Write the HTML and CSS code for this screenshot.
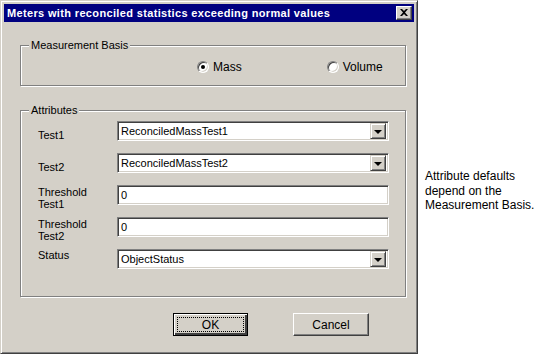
FILE: index.html
```html
<!DOCTYPE html>
<html>
<head>
<meta charset="utf-8">
<title>Meters with reconciled statistics</title>
<link rel="stylesheet" href="styles.css">
</head>
<body>
<div class="dialog">
  <div class="titlebar">
    <span class="title">Meters with reconciled statistics exceeding normal values</span>
    <span class="close"><svg width="8" height="7" viewBox="0 0 8 7"><path d="M0 0h2l2 2 2-2h2L5 3.5 8 7H6L4 5 2 7H0l3-3.5z" fill="#000"/></svg></span>
  </div>
  <div class="content">
    <fieldset class="group basis">
      <legend>Measurement Basis</legend>
      <div class="radios">
        <label class="radio"><span class="dot checked"></span>Mass</label>
        <label class="radio"><span class="dot"></span>Volume</label>
      </div>
    </fieldset>
    <fieldset class="group attrs">
      <legend>Attributes</legend>
      <div class="row">
        <span class="lbl low">Test1</span>
        <div class="combo"><span class="val">ReconciledMassTest1</span><span class="drop"><i></i></span></div>
      </div>
      <div class="row">
        <span class="lbl low">Test2</span>
        <div class="combo"><span class="val">ReconciledMassTest2</span><span class="drop"><i></i></span></div>
      </div>
      <div class="row">
        <span class="lbl two">Threshold<br>Test1</span>
        <div class="field"><span class="val">0</span></div>
      </div>
      <div class="row">
        <span class="lbl two">Threshold<br>Test2</span>
        <div class="field"><span class="val">0</span></div>
      </div>
      <div class="row">
        <span class="lbl">Status</span>
        <div class="combo"><span class="val">ObjectStatus</span><span class="drop"><i></i></span></div>
      </div>
    </fieldset>
    <div class="buttons">
      <button class="btn default"><span>OK</span></button>
      <button class="btn">Cancel</button>
    </div>
  </div>
</div>
<p class="note">Attribute defaults<br>depend on the<br>Measurement Basis.</p>
</body>
</html>
```
FILE: styles.css
```css
html, body {
  margin: 0;
  padding: 0;
  background: #fff;
}
body {
  display: flex;
  align-items: flex-start;
  font-family: "Liberation Sans", Arial, sans-serif;
  font-size: 11px;
  color: #000;
}
.dialog {
  width: 418px;
  height: 354px;
  box-sizing: border-box;
  background: #d4d0c8;
  border: 1px solid;
  border-color: #d4d0c8 #404040 #404040 #d4d0c8;
  box-shadow: inset 1px 1px 0 #fff, inset -1px -1px 0 #808080;
  padding: 3px;
  flex: none;
}
.titlebar {
  height: 18px;
  background: #000080;
  display: flex;
  align-items: center;
  justify-content: space-between;
  padding: 0 2px 0 3px;
}
.title {
  color: #fff;
  font-weight: bold;
  font-size: 11px;
  letter-spacing: 0.35px;
  white-space: nowrap;
}
.close {
  width: 16px;
  height: 14px;
  box-sizing: border-box;
  background: #d4d0c8;
  border: 1px solid;
  border-color: #fff #404040 #404040 #fff;
  box-shadow: inset -1px -1px 0 #808080;
  display: flex;
  align-items: center;
  justify-content: center;
}
.close svg { display: block; margin: 0 1px 1px 0; }
.content {
  padding: 17px 0 0 16px;
}
.group {
  margin: 0;
  width: 386px;
  box-sizing: border-box;
  border: 1px solid #808080;
  box-shadow: 1px 1px 0 #fff, inset 1px 1px 0 #fff;
  padding: 0;
}
.group legend {
  padding: 0 2px;
  margin-left: 8px;
  line-height: 13px;
  background: #d4d0c8;
}
.basis { height: 47px; }
.radios {
  display: flex;
  padding: 8px 0 0 176px;
}
.radio {
  display: flex;
  align-items: center;
  font-size: 12px;
  line-height: 14px;
}
.radio + .radio { margin-left: 85px; }
.dot {
  width: 12px;
  height: 12px;
  box-sizing: border-box;
  border-radius: 50%;
  background: #fff;
  border: 1px solid;
  border-color: #808080 #fff #fff #808080;
  box-shadow: inset 1px 1px 0 #404040, inset -1px -1px 0 #d4d0c8;
  margin-right: 4px;
  display: flex;
  align-items: center;
  justify-content: center;
}
.dot.checked::after {
  content: "";
  width: 4px;
  height: 4px;
  border-radius: 50%;
  background: #000;
}
.attrs {
  margin-top: 18px;
  height: 193px;
  padding: 4px 0 0 0;
  display: grid;
  grid-auto-rows: 20px;
  row-gap: 12px;
  align-content: start;
}
.row {
  display: flex;
  align-items: flex-start;
  padding-left: 17px;
}
.lbl {
  width: 79px;
  flex: none;
  line-height: 13px;
}
.lbl.low { padding-top: 8px; }
.lbl.two { line-height: 12px; padding-top: 1px; }
.combo, .field {
  width: 272px;
  height: 20px;
  box-sizing: border-box;
  background: #fff;
  border: 1px solid;
  border-color: #808080 #fff #fff #808080;
  box-shadow: inset 1px 1px 0 #404040, inset -1px -1px 0 #d4d0c8;
  display: flex;
  align-items: center;
  padding: 2px;
}
.val {
  flex: 1;
  padding-left: 1px;
  line-height: 13px;
  white-space: nowrap;
}
.drop {
  width: 16px;
  height: 16px;
  box-sizing: border-box;
  background: #d4d0c8;
  border: 1px solid;
  border-color: #d4d0c8 #404040 #404040 #d4d0c8;
  box-shadow: inset 1px 1px 0 #fff, inset -1px -1px 0 #808080;
  display: flex;
  align-items: center;
  justify-content: center;
}
.drop i {
  width: 0;
  height: 0;
  border-left: 4px solid transparent;
  border-right: 4px solid transparent;
  border-top: 4px solid #000;
  margin-top: 1px;
}
.buttons {
  display: flex;
  padding: 16px 0 0 153px;
  gap: 45px;
}
.btn {
  width: 75px;
  height: 23px;
  box-sizing: border-box;
  margin: 0;
  padding: 0;
  background: #d4d0c8;
  font-family: "Liberation Sans", Arial, sans-serif;
  font-size: 12px;
  color: #000;
  border: 1px solid;
  border-color: #fff #404040 #404040 #fff;
  box-shadow: inset -1px -1px 0 #808080;
}
.btn + .btn { width: 76px; }
.btn.default {
  border: 1px solid #000;
  box-shadow: inset 1px 1px 0 #fff, inset -2px -2px 0 #404040, inset -1px -1px 0 #808080;
  padding: 3px;
}
.btn.default span {
  display: flex;
  align-items: center;
  justify-content: center;
  height: 100%;
  box-sizing: border-box;
  outline: 1px dotted #000;
  outline-offset: -1px;
}
.note {
  flex: none;
  white-space: nowrap;
  margin: 169px 0 0 7px;
  font-size: 12px;
  line-height: 14.5px;
  letter-spacing: 0;
  color: #000;
}
```
